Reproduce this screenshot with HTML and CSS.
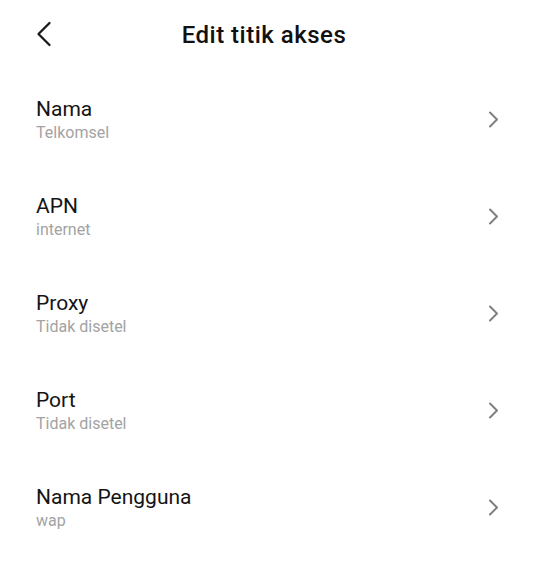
FILE: index.html
```html
<!DOCTYPE html>
<html lang="id">
<head>
<meta charset="utf-8">
<title>Edit titik akses</title>
<link rel="stylesheet" href="styles.css">
</head>
<body>
<div class="screen">
  <header class="topbar">
    <div class="back">
      <svg width="16" height="26" viewBox="0 0 16 26" aria-hidden="true"><path d="M13.5 2 L2.5 13 L13.5 24" fill="none" stroke="#1a1a1a" stroke-width="2.3" stroke-linecap="round" stroke-linejoin="round"/></svg>
    </div>
    <h1 class="title">Edit titik akses</h1>
    <div class="spacer"></div>
  </header>
  <ul class="list">
    <li class="row">
      <div class="text"><div class="label">Nama</div><div class="value">Telkomsel</div></div>
      <svg class="chev" width="11" height="17" viewBox="0 0 11 17" aria-hidden="true"><path d="M2 1.5 L9 8.5 L2 15.5" fill="none" stroke="#7f7f7f" stroke-width="2" stroke-linecap="round" stroke-linejoin="round"/></svg>
    </li>
    <li class="row">
      <div class="text"><div class="label">APN</div><div class="value">internet</div></div>
      <svg class="chev" width="11" height="17" viewBox="0 0 11 17" aria-hidden="true"><path d="M2 1.5 L9 8.5 L2 15.5" fill="none" stroke="#7f7f7f" stroke-width="2" stroke-linecap="round" stroke-linejoin="round"/></svg>
    </li>
    <li class="row">
      <div class="text"><div class="label">Proxy</div><div class="value">Tidak disetel</div></div>
      <svg class="chev" width="11" height="17" viewBox="0 0 11 17" aria-hidden="true"><path d="M2 1.5 L9 8.5 L2 15.5" fill="none" stroke="#7f7f7f" stroke-width="2" stroke-linecap="round" stroke-linejoin="round"/></svg>
    </li>
    <li class="row">
      <div class="text"><div class="label">Port</div><div class="value">Tidak disetel</div></div>
      <svg class="chev" width="11" height="17" viewBox="0 0 11 17" aria-hidden="true"><path d="M2 1.5 L9 8.5 L2 15.5" fill="none" stroke="#7f7f7f" stroke-width="2" stroke-linecap="round" stroke-linejoin="round"/></svg>
    </li>
    <li class="row">
      <div class="text"><div class="label">Nama Pengguna</div><div class="value">wap</div></div>
      <svg class="chev" width="11" height="17" viewBox="0 0 11 17" aria-hidden="true"><path d="M2 1.5 L9 8.5 L2 15.5" fill="none" stroke="#7f7f7f" stroke-width="2" stroke-linecap="round" stroke-linejoin="round"/></svg>
    </li>
  </ul>
</div>
</body>
</html>
```
FILE: styles.css
```css
html, body {
  margin: 0;
  padding: 0;
  background: #ffffff;
}
body {
  font-family: Roboto, "Noto Sans", "Liberation Sans", sans-serif;
  color: #141414;
}
.screen {
  width: 537px;
  min-height: 563px;
}
.topbar {
  height: 69px;
  display: grid;
  grid-template-columns: 1fr auto 1fr;
  align-items: center;
  padding: 0 36px;
  box-sizing: border-box;
}
.back {
  display: flex;
  align-items: center;
  height: 26px;
  margin-top: -2px;
}
.title {
  margin: 0 9px 0 0;
  font-size: 24px;
  font-weight: 500;
  letter-spacing: 0.5px;
  line-height: 30px;
  color: #111111;
}
.list {
  list-style: none;
  margin: 2px 0 0;
  padding: 0;
}
.row {
  height: 97px;
  display: flex;
  align-items: center;
  justify-content: space-between;
  padding: 0 38px 0 36px;
}
.text {
  display: flex;
  flex-direction: column;
}
.label {
  font-size: 21px;
  line-height: 26px;
  color: #141414;
}
.value {
  font-size: 16px;
  line-height: 22px;
  color: #a3a3a3;
}
.chev {
  display: block;
}
```
